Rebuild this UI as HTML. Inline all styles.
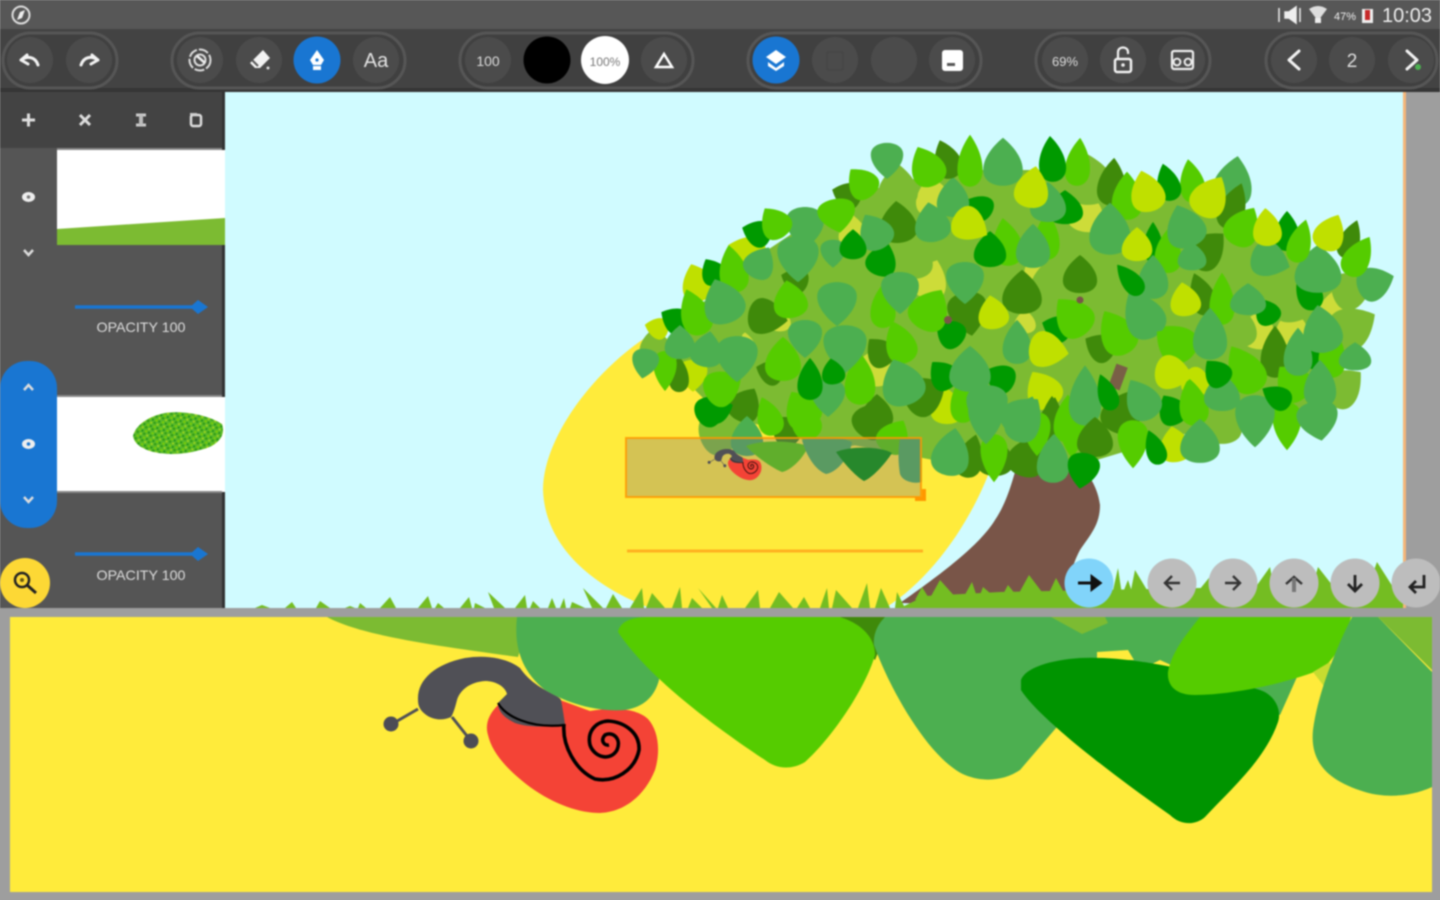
<!DOCTYPE html>
<html lang="en"><head><meta charset="utf-8"><title>Drawing app</title>
<style>
html,body{margin:0;padding:0;width:1440px;height:900px;overflow:hidden;background:#9e9e9e}
svg{display:block;filter:blur(.9px)}
text{font-family:"Liberation Sans",sans-serif}
</style></head><body>
<svg xmlns="http://www.w3.org/2000/svg" width="1440" height="900" viewBox="0 0 1440 900">
<defs>
<path id="l" d="M0-21C8-15 18-5 18 6C18 15 9 19 0 19C-9 19-18 15-18 6C-18-5-8-15 0-21Z"/>
<pattern id="sp" width="9" height="9" patternUnits="userSpaceOnUse" patternTransform="rotate(17) scale(.75)"><rect width="9" height="9" fill="#58b82a"/><circle cx="2" cy="2" r="1.6" fill="#2f9a10"/><circle cx="6.500" cy="3" r="1.400" fill="#a6d81a"/><circle cx="3.500" cy="7" r="1.500" fill="#7cd000"/><circle cx="7.500" cy="7.500" r="1.200" fill="#138a10"/></pattern>
<g id="snail">
<path fill="#f44336" d="M498 705C488 715 485 725 488 735C492 752 505 768 530 787C555 805 580 813 600 813C625 812 645 795 655 770C661 750 658 730 648 719C635 707 610 708 590 711L560 700Z"/>
<path fill="#505056" d="M418 700C417 680 435 664 465 658C490 654 510 660 520 668C535 690 560 695 561 700C563 710 564 718 565 724C550 727 530 728 515 723C505 718 498 712 498 703L507 694C505 686 495 681 485 681C470 682 460 690 457 700C455 708 453 714 451 717C443 721 432 720 425 714C420 710 418 706 418 700Z"/>
<path fill="none" stroke="#000" stroke-width="2.200" d="M498 703C505 716 530 729 565 725"/>
<path fill="none" stroke="#000" stroke-width="3.600" d="M564 724C562 745 575 770 595 779C615 783 635 770 639 750C640 733 625 722 608 721C595 722 587 732 590 745C594 757 610 762 617 750C622 738 612 731 605 735C600 740 604 746 609 745"/>
<path stroke="#505056" stroke-width="3" d="M392 724L418 709M471 741L452 717"/>
<circle cx="391" cy="724" r="7.500" fill="#4c4c55"/><circle cx="471" cy="741" r="7.500" fill="#4c4c55"/>
</g>
</defs>

<!-- status bar and toolbar -->
<rect width="1440" height="29" fill="#575757"/>
<rect y="29" width="1440" height="61" fill="#434343"/>
<rect y="88" width="1440" height="4" fill="#353535"/>
<circle cx="21" cy="15" r="8.500" fill="none" stroke="#ddd" stroke-width="2"/><path d="M25 10L22 18L17 20L20 12Z" fill="#eee"/>
<path d="M1279 8V22M1285 12H1289L1296 7V23L1289 18H1285ZM1300 8V22" fill="#eee" stroke="#eee" stroke-width="1.500"/>
<path d="M1309 9C1315 5 1321 5 1327 9L1318 21Z" fill="#ddd"/><rect x="1315" y="18" width="6" height="5" fill="#eee"/>
<text x="1345" y="20" font-size="11" fill="#eee" text-anchor="middle">47%</text>
<rect x="1362" y="9" width="11" height="14" fill="#eee"/><rect x="1365" y="10" width="5" height="10" fill="#c62828"/>
<text x="1382" y="22" font-size="20" fill="#eee" textLength="50" lengthAdjust="spacingAndGlyphs">10:03</text>

<g fill="#404040" stroke="#565656" stroke-width="3">
<rect x="3" y="33" width="114" height="55" rx="27.500"/>
<rect x="172" y="33" width="233" height="55" rx="27.500"/>
<rect x="460" y="33" width="233" height="55" rx="27.500"/>
<rect x="748" y="33" width="233" height="55" rx="27.500"/>
<rect x="1036" y="33" width="174" height="55" rx="27.500"/>
<rect x="1266" y="33" width="171" height="55" rx="27.500"/>
</g>
<g fill="#4b4b4b">
<circle cx="30" cy="60" r="23"/><circle cx="89" cy="60" r="23"/>
<circle cx="200" cy="60" r="23"/><circle cx="259" cy="60" r="23"/><circle cx="376" cy="60" r="23"/>
<circle cx="488" cy="60" r="23"/><circle cx="664" cy="60" r="23"/>
<circle cx="835" cy="60" r="23"/><circle cx="894" cy="60" r="23"/><circle cx="952" cy="60" r="23"/>
<circle cx="1065" cy="60" r="23"/><circle cx="1123" cy="60" r="23"/><circle cx="1182" cy="60" r="23"/>
<circle cx="1294" cy="60" r="23"/><circle cx="1352" cy="60" r="23"/><circle cx="1411" cy="60" r="23"/>
</g>
<circle cx="317" cy="60" r="23.500" fill="#1976d2"/><circle cx="776" cy="60" r="23.500" fill="#1976d2"/>
<circle cx="547" cy="60" r="23.500" fill="#000"/><circle cx="605" cy="60" r="24" fill="#fff"/>

<g fill="none" stroke="#f2f2f2" stroke-width="3" stroke-linecap="round" stroke-linejoin="round">
<path d="M21 60L27 55M21 60L28 64M21 60C27 56 35 56 38 65"/>
<path d="M98 60L92 55M98 60L91 64M98 60C92 56 84 56 81 65"/>
<path d="M1299 51L1289 60L1299 69M1407 51L1417 60L1407 69"/>
</g>
<circle cx="1418" cy="67" r="3" fill="#4caf50"/>
<circle cx="200" cy="60" r="10.500" fill="none" stroke="#ddd" stroke-width="2" stroke-dasharray="10 2"/>
<circle cx="200" cy="60" r="5.500" fill="none" stroke="#ddd" stroke-width="2"/><path d="M197 56L205 63" stroke="#eee" stroke-width="2.500"/>
<path d="M263 50L270 58L260 68H255L250 63Z" fill="#f2f2f2"/><path d="M252 60L258 66" stroke="#555" stroke-width="2"/><circle cx="268" cy="68" r="1.500" fill="#ddd"/>
<path d="M317 50L324 60L321 65H313L310 60Z" fill="#fff"/><rect x="313" y="66" width="8" height="4" fill="#fff"/><circle cx="317" cy="60" r="1.600" fill="#1976d2"/>
<text x="376" y="67" font-size="20" fill="#e4e4e4" text-anchor="middle">Aa</text>
<text x="488" y="66" font-size="14" fill="#ddd" text-anchor="middle">100</text>
<text x="605" y="66" font-size="12" fill="#777" text-anchor="middle">100%</text>
<path d="M664 54L672 67H656Z" fill="none" stroke="#fff" stroke-width="2.500"/>
<path d="M776 50L786 57L776 64L766 57Z" fill="#fff"/><path d="M768 62L776 68L784 62V66L776 71L768 66Z" fill="#fff"/>
<rect x="827" y="52" width="16" height="18" rx="2" fill="none" stroke="#464646" stroke-width="2"/>
<rect x="942" y="50" width="21" height="21" rx="3" fill="#fff"/><rect x="947" y="63" width="8" height="3" fill="#555"/>
<text x="1065" y="66" font-size="13" fill="#ddd" text-anchor="middle">69%</text>
<rect x="1115" y="59" width="16" height="13" rx="2" fill="none" stroke="#f2f2f2" stroke-width="2.500"/><path d="M1118 58V52C1118 46 1128 46 1128 52V54" fill="none" stroke="#f2f2f2" stroke-width="2.200"/><circle cx="1123" cy="65" r="1.800" fill="#eee"/>
<rect x="1172" y="51" width="21" height="18" rx="2" fill="none" stroke="#eee" stroke-width="2.200"/><circle cx="1177" cy="62" r="3.400" fill="none" stroke="#eee" stroke-width="2"/><circle cx="1188" cy="62" r="3.400" fill="none" stroke="#eee" stroke-width="2"/>
<text x="1352" y="67" font-size="19" fill="#ddd" text-anchor="middle">2</text>

<!-- left panel -->
<rect y="92" width="225" height="516" fill="#555"/>
<rect y="92" width="225" height="56" fill="#434343"/>
<rect x="222" y="92" width="3" height="516" fill="#333"/>
<path d="M22 120H35M28.500 113.500V126.500" stroke="#ddd" stroke-width="3"/>
<path d="M80 115L90 125M90 115L80 125" stroke="#ddd" stroke-width="3"/>
<path d="M136 115H146M136 125H146M141 115V125" stroke="#ccc" stroke-width="3"/><rect x="139" y="115" width="4" height="10" fill="#bbb"/>
<rect x="191" y="115" width="10" height="11" rx="2" fill="none" stroke="#ddd" stroke-width="2.500"/><rect x="190" y="113" width="7" height="2" fill="#ccc"/>
<rect x="57" y="150" width="168" height="95" fill="#fff"/><path d="M57 229L225 218V245H57Z" fill="#7cbb32"/>
<rect x="57" y="397" width="168" height="95" fill="#fff"/>
<path d="M133 436C136 424 150 416 165 413C185 410 210 416 222 424C226 436 218 446 200 450C180 456 155 455 143 448C137 445 134 441 133 436Z" fill="url(#sp)"/>
<rect x="57" y="148" width="165" height="2" fill="#888"/><rect x="57" y="395" width="165" height="2" fill="#888"/><rect x="57" y="491" width="165" height="2" fill="#888"/>
<rect x="0" y="361" width="57" height="167" rx="27" fill="#1976d2"/>
<g fill="#eee">
<ellipse cx="28.500" cy="197" rx="6.500" ry="5"/><ellipse cx="28.500" cy="444" rx="6.500" ry="5"/>
</g>
<g fill="none" stroke="#ddd" stroke-width="2.500"><path d="M24 250L28.500 255L33 250M24 497L28.500 502L33 497M24 390L28.500 385L33 390"/></g>
<circle cx="28.500" cy="197" r="1.800" fill="#777"/><circle cx="28.500" cy="444" r="1.800" fill="#1976d2"/>
<path d="M75 307H195M75 554H195" stroke="#1976d2" stroke-width="3.500"/>
<path d="M190 307L198 300L208 307L198 314ZM190 554L198 547L208 554L198 561Z" fill="#1976d2"/>
<text x="141" y="332" font-size="14" fill="#ddd" text-anchor="middle" textLength="89" lengthAdjust="spacingAndGlyphs">OPACITY 100</text>
<text x="141" y="580" font-size="14" fill="#ddd" text-anchor="middle" textLength="89" lengthAdjust="spacingAndGlyphs">OPACITY 100</text>
<circle cx="25" cy="583" r="25" fill="#fdd835"/>
<circle cx="22" cy="580" r="7" fill="none" stroke="#222" stroke-width="2.500"/><path d="M27 585L36 593" stroke="#222" stroke-width="3"/><circle cx="22" cy="580" r="2" fill="#6a5a10"/>

<!-- canvas -->
<rect x="225" y="92" width="1178" height="516" fill="#d0fbff"/>
<rect x="1403" y="92" width="3" height="516" fill="#f4b67a"/>
<rect x="1406" y="92" width="34" height="516" fill="#9e9e9e"/>
<path fill="#ffeb3b" d="M645 338C590 375 543 440 543 490C545 545 590 585 650 608H885C930 580 970 525 992 465L800 340Z"/>
<path fill="#795548" d="M1017 465C1010 490 1005 505 995 520C980 545 940 575 900 603L1069 608C1068 580 1072 565 1080 550C1090 535 1100 525 1100 505C1098 490 1092 480 1085 470Z"/>
<path fill="#7cbb32" d="M665 350L700 305L760 255L850 195L950 170L1060 170L1200 195L1290 250L1340 280L1355 300L1340 380L1300 415L1180 435L1080 465L960 465L800 435L720 415L685 380Z"/>
<g fill="#cddc39">
<use href="#l" transform="translate(933 197)rotate(-10)"/><use href="#l" transform="translate(875 367)rotate(20)"/><use href="#l" transform="translate(930 280)rotate(20)"/>
<use href="#l" transform="translate(1037 268)scale(.7)"/><use href="#l" transform="translate(1088 217)rotate(130)"/><use href="#l" transform="translate(1025 322)scale(.6)"/>
<use href="#l" transform="translate(1258 330)rotate(15)"/><use href="#l" transform="translate(1292 328)scale(.9)"/><use href="#l" transform="translate(1333 308)scale(.8)"/>
<use href="#l" transform="translate(853 232)scale(.8)"/><use href="#l" transform="translate(745 345)scale(.6)"/><use href="#l" transform="translate(780 320)scale(.6)"/>
</g>
<g fill="#7cbb32">
<use href="#l" transform="translate(898 187)scale(1.1)"/><use href="#l" transform="translate(850 273)scale(1.1)"/><use href="#l" transform="translate(913 258)scale(1.1)"/>
<use href="#l" transform="translate(758 290)scale(.95)"/><use href="#l" transform="translate(723 325)scale(1.1)"/><use href="#l" transform="translate(858 320)scale(1.1)"/>
<use href="#l" transform="translate(655 345)scale(.85)"/><use href="#l" transform="translate(763 387)scale(1.2)"/><use href="#l" transform="translate(845 410)scale(1.1)"/>
<use href="#l" transform="translate(937 347)rotate(60)scale(1.1)"/><use href="#l" transform="translate(1053 283)scale(1.3)"/><use href="#l" transform="translate(1090 180)rotate(-10)scale(1.3)"/>
<use href="#l" transform="translate(1143 227)scale(1.1)"/><use href="#l" transform="translate(1237 270)scale(1.3)"/><use href="#l" transform="translate(1292 297)rotate(-20)scale(1.3)"/>
<use href="#l" transform="translate(1352 290)rotate(70)scale(1.05)"/><use href="#l" transform="translate(1353 327)rotate(60)scale(1.2)"/><use href="#l" transform="translate(1343 387)rotate(50)scale(1.1)"/>
<use href="#l" transform="translate(1237 327)scale(1.1)"/><use href="#l" transform="translate(1093 367)rotate(100)scale(1.2)"/><use href="#l" transform="translate(1158 422)rotate(-40)scale(1.1)"/>
<use href="#l" transform="translate(1222 423)scale(1.1)"/><use href="#l" transform="translate(722 432)rotate(70)scale(1.2)"/><use href="#l" transform="translate(847 420)rotate(30)scale(1.3)"/>
<use href="#l" transform="translate(926 433)scale(1.1)"/>
<use href="#l" transform="translate(1110 290)scale(1.2)"/><use href="#l" transform="translate(1143 340)scale(1.2)"/>
</g>
<g fill="#bfe000">
<use href="#l" transform="translate(747 252)rotate(-70)scale(.95)"/><use href="#l" transform="translate(698 283)rotate(-20)scale(.95)"/>
<use href="#l" transform="translate(657 328)rotate(-75)scale(.6)"/><use href="#l" transform="translate(693 375)scale(.8)rotate(180)"/>
<use href="#l" transform="translate(1197 383)rotate(120)scale(.8)"/><use href="#l" transform="translate(1043 390)rotate(-30)"/><use href="#l" transform="translate(1175 445)rotate(-10)scale(.9)"/>
<use href="#l" transform="translate(947 407)scale(.9)"/>
</g>
<g fill="#3f8a0a">
<use href="#l" transform="translate(847 195)rotate(-70)scale(.75)"/><use href="#l" transform="translate(898 223)rotate(-5)scale(1.05)"/>
<use href="#l" transform="translate(795 280)rotate(-70)scale(.7)"/><use href="#l" transform="translate(767 317)rotate(100)scale(1)"/><use href="#l" transform="translate(968 313)rotate(170)scale(1.1)"/>
<use href="#l" transform="translate(679 375)scale(.55,.9)"/><use href="#l" transform="translate(770 372)rotate(-70)scale(.7)"/><use href="#l" transform="translate(880 352)rotate(-40)scale(.8)"/>
<use href="#l" transform="translate(925 395)rotate(60)scale(1.1)"/><use href="#l" transform="translate(745 405)rotate(30)scale(.9)"/><use href="#l" transform="translate(877 413)scale(.9)"/>
<use href="#l" transform="translate(1112 183)rotate(5)scale(.8,1.2)"/><use href="#l" transform="translate(1207 250)rotate(45)scale(1,1.1)"/>
<use href="#l" transform="translate(1350 240)rotate(20)scale(.6,1)"/>
<use href="#l" transform="translate(1202 295)rotate(-20)scale(.7,1.1)"/><use href="#l" transform="translate(1275 353)scale(.8,1.3)"/><use href="#l" transform="translate(1100 347)rotate(-60)scale(.8)"/>
<use href="#l" transform="translate(1122 413)rotate(20)scale(1.1)"/><use href="#l" transform="translate(1052 417)scale(.6,1)"/>
<use href="#l" transform="translate(1027 457)rotate(20)scale(1.05)"/><use href="#l" transform="translate(786 430)rotate(-50)scale(.85)"/><use href="#l" transform="translate(872 420)rotate(40)scale(1)"/>
<use href="#l" transform="translate(970 457)rotate(15)scale(.75,1.1)"/><use href="#l" transform="translate(995 457)"/><use href="#l" transform="translate(1051 420)rotate(10)scale(.7,1.1)"/>
</g>
<g fill="#009a00">
<use href="#l" transform="translate(980 207)rotate(-60)scale(.7)"/><use href="#l" transform="translate(757 233)rotate(-70)scale(.75)"/><use href="#l" transform="translate(713 272)rotate(-30)scale(.7)"/>
<use href="#l" transform="translate(675 320)rotate(-60)scale(.75)"/><use href="#l" transform="translate(882 260)rotate(20)scale(.85)"/>
<use href="#l" transform="translate(950 333)rotate(-50)scale(.8)"/>
<use href="#l" transform="translate(943 375)rotate(-40)scale(.8)"/><use href="#l" transform="translate(1000 378)rotate(-65)scale(.8)"/>
<use href="#l" transform="translate(712 410)rotate(60)scale(.85,.9)"/><use href="#l" transform="translate(1065 208)scale(1,.85)"/>
<use href="#l" transform="translate(1153 243)scale(.55,1)"/>
<use href="#l" transform="translate(1287 232)scale(.7,1)"/><use href="#l" transform="translate(1308 290)rotate(-20)scale(.7,1.1)"/><use href="#l" transform="translate(1267 312)rotate(-30)scale(.7)"/>
<use href="#l" transform="translate(1313 350)scale(.7,1)"/><use href="#l" transform="translate(1057 328)rotate(-70)scale(.75)"/>
<use href="#l" transform="translate(1172 410)rotate(-30)scale(.8)"/>
<use href="#l" transform="translate(719 410)rotate(70)scale(.7)"/>
</g>
<g fill="#55cc00">
<use href="#l" transform="translate(733 270)rotate(-10)scale(.8,1.2)"/>
<use href="#l" transform="translate(695 313)rotate(-20)scale(.85,1.2)"/><use href="#l" transform="translate(883 307)scale(.7,1.1)"/>
<use href="#l" transform="translate(930 310)rotate(30)scale(1.1)"/><use href="#l" transform="translate(665 370)rotate(180)scale(.65,1)"/><use href="#l" transform="translate(723 387)rotate(60)scale(1)"/>
<use href="#l" transform="translate(783 360)scale(1,1.1)"/><use href="#l" transform="translate(860 380)scale(.85,1.3)"/><use href="#l" transform="translate(900 343)rotate(-20)scale(.85,1.1)"/>
<use href="#l" transform="translate(963 400)scale(.7,1.2)"/><use href="#l" transform="translate(802 410)rotate(-30)scale(1)"/><use href="#l" transform="translate(1007 243)rotate(-10)scale(.85,1.2)"/>
<use href="#l" transform="translate(1127 197)scale(.85,1.2)"/>
<use href="#l" transform="translate(1168 252)scale(.75,1.1)"/><use href="#l" transform="translate(1047 237)scale(.7,1.2)"/><use href="#l" transform="translate(1222 300)scale(.7,1.3)"/>
<use href="#l" transform="translate(1177 342)rotate(-50)scale(1,1.1)"/><use href="#l" transform="translate(1332 353)scale(.75,1.3)"/><use href="#l" transform="translate(1245 370)rotate(-30)scale(1,1.3)"/>
<use href="#l" transform="translate(1293 383)rotate(-40)scale(1)"/><use href="#l" transform="translate(1193 403)rotate(-10)scale(.8,1.2)"/><use href="#l" transform="translate(1287 425)rotate(180)scale(.8,1.2)"/>
<use href="#l" transform="translate(1073 317)rotate(-40)scale(1.05,1.1)"/><use href="#l" transform="translate(1117 333)rotate(-30)scale(1,1.2)"/><use href="#l" transform="translate(1068 420)scale(.8,1.2)"/>
<use href="#l" transform="translate(1133 443)rotate(180)scale(.85,1.2)"/>
<use href="#l" transform="translate(769 417)rotate(-20)scale(.7,1)"/><use href="#l" transform="translate(804 420)rotate(-30)scale(.8,1.1)"/><use href="#l" transform="translate(894 437)rotate(30)scale(.9)"/>
<use href="#l" transform="translate(1072 433)rotate(180)scale(.7,1.2)"/><use href="#l" transform="translate(994 457)rotate(180)scale(.75,1.2)"/><use href="#l" transform="translate(1037 433)rotate(180)scale(.75,1.1)"/>
</g>
<g fill="#4caf50">
<use href="#l" transform="translate(1003 163)scale(1.1,1.2)"/><use href="#l" transform="translate(953 198)scale(.9,1)"/>
<use href="#l" transform="translate(875 232)rotate(-30)scale(.95)"/><use href="#l" transform="translate(805 227)rotate(180)scale(1.05)"/>
<use href="#l" transform="translate(760 263)rotate(30)scale(.85)"/><use href="#l" transform="translate(798 258)rotate(180)scale(1.15)"/><use href="#l" transform="translate(833 253)rotate(180)scale(.7)"/>
<use href="#l" transform="translate(723 302)rotate(-20)scale(1.15)"/><use href="#l" transform="translate(805 338)rotate(180)scale(.95)"/><use href="#l" transform="translate(845 348)rotate(180)scale(1.2)"/>
<use href="#l" transform="translate(737 358)rotate(180)scale(1.15)"/><use href="#l" transform="translate(707 350)rotate(10)scale(.9)"/><use href="#l" transform="translate(680 343)scale(.85)"/>
<use href="#l" transform="translate(645 363)rotate(190)scale(.75)"/><use href="#l" transform="translate(828 397)rotate(180)scale(.95)"/><use href="#l" transform="translate(902 383)rotate(-20)scale(1.2)"/>
<use href="#l" transform="translate(970 370)scale(1.15)"/><use href="#l" transform="translate(987 407)rotate(180)scale(1.15)"/><use href="#l" transform="translate(1033 247)scale(.95,1.1)"/>
<use href="#l" transform="translate(1048 203)scale(1,1)"/><use href="#l" transform="translate(1110 230)scale(1.15,1.3)"/><use href="#l" transform="translate(1185 227)rotate(-20)scale(1.1)"/>
<use href="#l" transform="translate(1192 257)scale(.8,.7)"/><use href="#l" transform="translate(1233 183)rotate(10)scale(1.1,1.3)"/><use href="#l" transform="translate(1270 260)rotate(110)scale(1)"/>
<use href="#l" transform="translate(1318 270)scale(1.3,1.2)"/><use href="#l" transform="translate(1375 283)rotate(70)scale(.95)"/><use href="#l" transform="translate(1153 278)scale(.85,1.1)"/>
<use href="#l" transform="translate(1248 300)scale(1,.8)"/><use href="#l" transform="translate(1143 315)rotate(-30)scale(1.1,1.3)"/><use href="#l" transform="translate(1210 335)scale(.95,1.3)"/>
<use href="#l" transform="translate(1322 330)rotate(-10)scale(1.1,1.2)"/><use href="#l" transform="translate(1298 353)scale(.8,1.2)"/><use href="#l" transform="translate(1355 357)scale(.9,.7)"/>
<use href="#l" transform="translate(1320 385)scale(.9,1.2)"/><use href="#l" transform="translate(1255 420)rotate(180)scale(1.1,1.3)"/><use href="#l" transform="translate(1318 420)rotate(170)scale(1.15,1)"/>
<use href="#l" transform="translate(1200 442)scale(1.1,1.1)"/><use href="#l" transform="translate(1222 393)scale(1,.95)"/><use href="#l" transform="translate(1085 397)scale(.9,1.5)"/>
<use href="#l" transform="translate(1142 400)rotate(-30)scale(.95,1.1)"/><use href="#l" transform="translate(1053 460)scale(.9,1.2)"/><use href="#l" transform="translate(1023 417)rotate(40)scale(1.2,1.1)"/>
<use href="#l" transform="translate(1017 343)scale(.8,1.1)"/><use href="#l" transform="translate(747 437)scale(.9,1)"/>
<use href="#l" transform="translate(951 453)rotate(10)scale(1.05,1.2)"/><use href="#l" transform="translate(986 417)rotate(180)scale(1,1.3)"/>
<use href="#l" transform="translate(1024 420)rotate(20)scale(.95,1.2)"/><use href="#l" transform="translate(1054 457)scale(.8,1.1)"/>
</g>
<!-- leaves hanging into the selection -->
<path fill="#55cc00" d="M746 446C760 440 790 440 808 446C805 456 792 470 782 472C772 468 755 456 746 446Z"/>
<path fill="#4caf50" d="M802 440C815 436 840 436 852 442C850 456 838 472 826 474C815 470 806 455 802 440Z"/>
<path fill="#009400" d="M836 452C850 446 880 446 892 453C885 464 872 478 864 481C855 476 843 462 836 452Z"/>
<path fill="#4caf50" d="M900 438H922V482C915 484 903 482 900 474C898 462 898 450 900 438Z"/>
<g fill="#795548"><rect x="1112" y="365" width="12" height="24" transform="rotate(20 1118 377)" opacity=".9"/><circle cx="948" cy="320" r="4"/><circle cx="1080" cy="300" r="3.500"/></g>
<!-- top layer of mixed leaves -->
<g fill="#3f8a0a">
<use href="#l" transform="translate(947 160)rotate(-20)scale(.75,1)"/><use href="#l" transform="translate(1233 207)rotate(20)scale(.75,1.2)"/>
<use href="#l" transform="translate(1022 293)scale(1.1)"/><use href="#l" transform="translate(1080 275)scale(.95)"/><use href="#l" transform="translate(1095 438)scale(1)"/>
<use href="#l" transform="translate(1350 240)rotate(20)scale(.55,.95)"/>
</g>
<g fill="#55cc00">
<use href="#l" transform="translate(927 167)rotate(-25)scale(.95,1.05)"/><use href="#l" transform="translate(970 162)scale(.7,1.3)"/><use href="#l" transform="translate(862 183)rotate(-40)scale(.85)"/>
<use href="#l" transform="translate(837 215)rotate(170)scale(1.05,.85)"/><use href="#l" transform="translate(775 223)rotate(-35)scale(.85)"/><use href="#l" transform="translate(790 300)rotate(-10)scale(.95)"/>
<use href="#l" transform="translate(1078 163)rotate(5)scale(.7,1.2)"/><use href="#l" transform="translate(1192 182)rotate(-10)scale(.7,1.1)"/><use href="#l" transform="translate(1243 227)rotate(30)scale(.95,1.05)"/>
<use href="#l" transform="translate(1300 242)rotate(15)scale(.65,1.1)"/><use href="#l" transform="translate(1358 257)rotate(30)scale(.75,1.1)"/><use href="#l" transform="translate(1173 345)rotate(-50)scale(.9,1)"/>
</g>
<g fill="#009a00">
<use href="#l" transform="translate(1052 160)rotate(-5)scale(.75,1.15)"/><use href="#l" transform="translate(1168 183)rotate(-15)scale(.65,.95)"/><use href="#l" transform="translate(990 250)scale(.9)"/>
<use href="#l" transform="translate(853 245)scale(.75)"/><use href="#l" transform="translate(1130 280)rotate(-40)scale(.55,.95)"/><use href="#l" transform="translate(1217 373)rotate(-40)scale(.75)"/>
<use href="#l" transform="translate(1277 397)rotate(-60)scale(.65,.8)"/><use href="#l" transform="translate(810 380)scale(.7,1.05)"/><use href="#l" transform="translate(833 372)rotate(-10)scale(.65)"/>
<use href="#l" transform="translate(1107 393)rotate(-20)scale(.55,.95)"/><use href="#l" transform="translate(1155 448)rotate(-20)scale(.55,.9)"/><use href="#l" transform="translate(1083 470)rotate(190)scale(.9)"/>
</g>
<g fill="#bfe000">
<use href="#l" transform="translate(970 225)rotate(120)scale(.95)"/><use href="#l" transform="translate(1032 188)rotate(10)scale(.95,1.05)"/><use href="#l" transform="translate(1147 192)rotate(-15)scale(.95,1.05)"/>
<use href="#l" transform="translate(1210 197)rotate(30)scale(1,1.1)"/><use href="#l" transform="translate(1267 228)rotate(-5)scale(.8,.95)"/><use href="#l" transform="translate(1330 233)rotate(25)scale(.85,.95)"/>
<use href="#l" transform="translate(1137 245)scale(.85)"/><use href="#l" transform="translate(1185 300)rotate(-10)scale(.85)"/><use href="#l" transform="translate(1048 350)rotate(100)scale(1)"/>
<use href="#l" transform="translate(1173 373)rotate(100)scale(.95)"/><use href="#l" transform="translate(993 313)rotate(-10)scale(.85)"/>
</g>
<g fill="#4caf50">
<use href="#l" transform="translate(887 160)rotate(180)scale(.9)"/><use href="#l" transform="translate(932 223)rotate(-10)scale(1)"/><use href="#l" transform="translate(900 292)rotate(180)scale(1.05)"/>
<use href="#l" transform="translate(837 303)rotate(180)scale(1.1)"/><use href="#l" transform="translate(965 282)rotate(180)scale(1.05)"/>
</g>

<!-- grass -->
<path fill="#74bd22" d="M900 608L925 596L1000 592L1100 590L1200 588L1300 588L1403 590V608ZM255 608L262 605L270 608L285 608L292 602L296 608L316 608L320 601L330 608L345 608L350 606L355 608L358 608L360 603L366 608L380 608L390 597L396 608L418 608L428 596L432 608L435 608L438 603L444 608L460 608L469 597L472 608L474 608L475 603L485 608L494 608L488 592L505 608L515 608L525 595L527 608L530 608L533 601L540 608L548 608L552 598L556 608L560 608L564 598L566 608L570 608L572 602L585 608L592 608L583 588L603 608L606 608L613 594L622 608L630 608L642 588L644 608L646 608L652 593L665 608L672 608L680 587L682 608L688 608L692 598L702 608L712 608L698 588L716 608L718 608L722 595L728 608L745 608L758 590L760 608L770 608L779 592L793 608L797 608L804 597L810 608L820 608L827 588L829 608L832 608L836 590L852 608L858 608L867 583L870 608L875 608L881 588L890 608L895 608L897 592L905 608Z"/>
<path fill="#74bd22" d="M915 600L922 587L930 600ZM930 598L940 580L958 600ZM962 600L972 582L978 600ZM978 600L983 587L998 600ZM1000 600L1008 585L1020 600ZM1018 595L1029 575L1048 600ZM1048 595L1056 578L1068 600ZM1112 595L1118 568L1122 595ZM1122 595L1128 580L1133 595ZM1130 595L1135 570L1150 595ZM1195 595L1213 573L1222 595ZM1250 595L1270 567L1275 595ZM1310 595L1318 567L1340 595ZM1365 595L1377 562L1398 595Z"/>

<!-- selection -->
<rect x="626" y="438" width="295" height="59" fill="#78708a" fill-opacity=".32" stroke="#ff9800" stroke-opacity=".85" stroke-width="2"/>
<path d="M915 499H924V489" fill="none" stroke="#ff9800" stroke-width="4"/>
<use href="#snail" transform="translate(632.500 317.600)scale(.196 .2)"/>
<rect x="627" y="549.500" width="296" height="3" fill="#ffb020"/>

<!-- arrow buttons -->
<circle cx="1089" cy="583" r="24.500" fill="#81d4fa"/>
<g fill="#bdbdbd"><circle cx="1172" cy="583" r="24.500"/><circle cx="1233" cy="583" r="24.500"/><circle cx="1294" cy="583" r="24.500"/><circle cx="1355" cy="583" r="24.500"/><circle cx="1416" cy="583" r="24.500"/></g>
<path d="M1078 583H1093M1092 577L1100 583L1092 589Z" fill="#111" stroke="#111" stroke-width="3"/>
<g fill="none" stroke="#333" stroke-width="2.400"><path d="M1180 583H1165M1172 576L1165 583L1172 590"/><path d="M1225 583H1240M1233 576L1240 583L1233 590"/><path d="M1286 584L1294 577L1302 584"/><path d="M1294 578V592" stroke="#777" stroke-width="4"/><path d="M1355 575V590M1348 584L1355 591L1362 584" stroke="#222" stroke-width="2.800"/><path d="M1424 575V587H1411M1416 581L1410 587L1416 593" stroke="#222" stroke-width="2.800"/></g>

<!-- divider and zoom panel -->
<rect y="608" width="1440" height="292" fill="#9e9e9e"/>
<rect x="10" y="617" width="1422" height="275" fill="#ffeb3b"/>
<path fill="#7cbb32" d="M327 617C360 635 430 645 518 657L530 617Z"/>
<use href="#snail"/>
<path fill="#4caf50" d="M517 617C514 645 520 670 545 690C570 705 600 712 625 710C645 707 655 695 659 680L660 617Z"/>
<path fill="#3f8a0a" d="M833 617H892L875 660Z"/>
<path fill="#55cc00" d="M618 632C620 622 630 617 650 617L840 617C865 625 875 640 875 655C865 690 830 740 805 762C790 771 775 768 765 760C720 730 650 680 618 632Z"/>
<path fill="#4caf50" d="M874 645C890 690 930 760 965 775C985 783 1005 780 1020 770L1080 700L1160 660L1280 715L1297 677L1201 617H885C877 625 873 635 874 645Z"/>
<path fill="#ffeb3b" d="M1097 652L1128 650L1134 660H1097Z"/>
<path fill="#7cbb32" d="M1051 617H1105L1108 623L1082 634Z"/>
<path fill="#009400" d="M1021 680C1025 668 1050 660 1080 658C1120 656 1180 665 1260 690C1275 695 1282 710 1278 722C1265 760 1230 790 1205 817C1195 826 1180 825 1170 815C1120 780 1040 720 1021 690Z"/>
<path fill="#55cc00" d="M1200 617H1351C1345 640 1335 660 1320 670C1280 685 1230 695 1195 695C1175 695 1167 685 1168 672C1172 650 1190 630 1200 617Z"/>
<path fill="#c6dc30" d="M1313 672L1330 662L1335 682L1327 690Z"/>
<path fill="#7cbb32" d="M1378 617H1432V670Z"/>
<path fill="#4caf50" d="M1352 617H1378L1432 672V787C1410 797 1385 798 1365 792C1325 780 1310 760 1313 730C1318 690 1340 640 1352 617Z"/>
</svg>
</body></html>
